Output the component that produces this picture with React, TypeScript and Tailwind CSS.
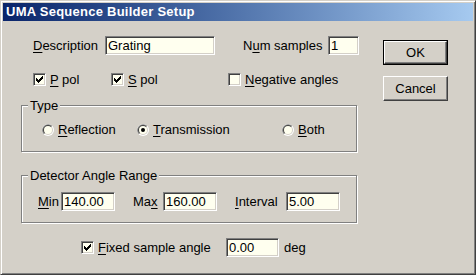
import React from "react";

const FONT = "font-['Liberation_Sans',Arial,sans-serif]";

// access-key underline
function Ul({ children }: { children: React.ReactNode }) {
  return <span className="underline decoration-1 underline-offset-2">{children}</span>;
}

function TextBox({ value, w }: { value: string; w: string }) {
  return (
    <div
      className={`${w} h-[19px] shrink-0 flex items-center pl-[2px] bg-[#ffffef] border border-t-[#808080] border-l-[#808080] border-r-white border-b-white shadow-[inset_1px_1px_0_#404040,inset_-1px_-1px_0_#d4d0c8]`}
    >
      {value}
    </div>
  );
}

function CheckBox({ checked }: { checked?: boolean }) {
  return (
    <div className="w-[13px] h-[13px] shrink-0 flex items-center justify-center bg-[#ffffef] border border-t-[#808080] border-l-[#808080] border-r-white border-b-white shadow-[inset_1px_1px_0_#404040,inset_-1px_-1px_0_#d4d0c8]">
      {checked && (
        <svg width="7" height="7" viewBox="0 0 7 7" shapeRendering="crispEdges">
          <path
            d="M6 0h1v1h-1z M5 1h2v1h-2z M0 2h1v1h-1z M4 2h3v1h-3z M0 3h2v1h-2z M3 3h3v1h-3z M0 4h5v1h-5z M1 5h3v1h-3z M2 6h1v1h-1z"
            fill="#000"
          />
        </svg>
      )}
    </div>
  );
}

function Radio({ checked }: { checked?: boolean }) {
  return (
    <svg width="12" height="12" viewBox="0 0 12 12" className="shrink-0">
      <circle cx="6" cy="6" r="6" fill="#fff" />
      <path d="M1.76 10.24A6 6 0 0 1 10.24 1.76L6 6Z" fill="#808080" />
      <circle cx="6" cy="6" r="5" fill="#d4d0c8" />
      <path d="M2.46 9.54A5 5 0 0 1 9.54 2.46L6 6Z" fill="#404040" />
      <circle cx="6" cy="6" r="4" fill="#ffffef" />
      {checked && <circle cx="6" cy="6" r="2" fill="#000" />}
    </svg>
  );
}

function Button({ children, isDefault }: { children: React.ReactNode; isDefault?: boolean }) {
  const face = (
    <div className="w-full h-full flex items-center justify-center border border-t-white border-l-white border-r-[#404040] border-b-[#404040] shadow-[inset_-1px_-1px_0_#808080]">
      {children}
    </div>
  );
  return isDefault ? (
    <div className="w-[65px] h-[25px] border border-black">{face}</div>
  ) : (
    <div className="w-[65px] h-[25px]">{face}</div>
  );
}

export default function App() {
  return (
    <div
      className={`w-[476px] h-[275px] p-[2px] bg-[#d4d0c8] text-[13px] text-black border border-t-[#d4d0c8] border-l-[#d4d0c8] border-r-[#404040] border-b-[#404040] shadow-[inset_1px_1px_0_#fff,inset_-1px_-1px_0_#808080] ${FONT}`}
    >
      {/* Title bar */}
      <div className="h-[18px] flex items-center pl-[3px] bg-gradient-to-r from-[#0a246a] to-[#a6caf0] text-white font-bold tracking-[0.25px]">
        UMA Sequence Builder Setup
      </div>

      <div className="flex">
        <div className="w-[338px] ml-[18px]">
          {/* Description / Num samples */}
          <div className="mt-[15px] h-[19px] flex items-center">
            <span className="ml-[12px] w-[72px]">
              <Ul>D</Ul>escription
            </span>
            <TextBox w="w-[110px]" value="Grating" />
            <span className="ml-[28px] w-[85px]">
              N<Ul>u</Ul>m samples
            </span>
            <TextBox w="w-[31px]" value="1" />
          </div>

          {/* Polarisation checkboxes */}
          <div className="mt-[18px] h-[13px] flex items-center">
            <label className="ml-[12px] w-[78px] flex items-center gap-[4px]">
              <CheckBox checked />
              <span>
                <Ul>P</Ul> pol
              </span>
            </label>
            <label className="w-[117px] flex items-center gap-[4px]">
              <CheckBox checked />
              <span>
                <Ul>S</Ul> pol
              </span>
            </label>
            <label className="flex items-center gap-[4px]">
              <CheckBox />
              <span>
                <Ul>N</Ul>egative angles
              </span>
            </label>
          </div>

          {/* Type */}
          <div className="relative mt-[19px] w-[336px] h-[47px] pt-[18px] pl-[20px] border border-[#808080] shadow-[inset_1px_1px_0_#fff,1px_1px_0_#fff]">
            <span className="absolute left-[6px] -top-[8px] px-[2px] leading-[15px] bg-[#d4d0c8]">Type</span>
            <div className="h-[12px] flex items-center">
              <label className="w-[95px] flex items-center gap-[4px]">
                <Radio />
                <span>
                  <Ul>R</Ul>eflection
                </span>
              </label>
              <label className="w-[145px] flex items-center gap-[4px]">
                <Radio checked />
                <span>
                  <Ul>T</Ul>ransmission
                </span>
              </label>
              <label className="flex items-center gap-[4px]">
                <Radio />
                <span>
                  <Ul>B</Ul>oth
                </span>
              </label>
            </div>
          </div>

          {/* Detector Angle Range */}
          <div className="relative mt-[23px] w-[336px] h-[48px] pt-[16px] pl-[16px] border border-[#808080] shadow-[inset_1px_1px_0_#fff,1px_1px_0_#fff]">
            <span className="absolute left-[6px] -top-[8px] px-[2px] leading-[15px] bg-[#d4d0c8]">
              Detector Angle Range
            </span>
            <div className="h-[19px] flex items-center">
              <span className="w-[23px]">
                <Ul>M</Ul>in
              </span>
              <TextBox w="w-[54px]" value="140.00" />
              <span className="ml-[18px] w-[30px]">
                Ma<Ul>x</Ul>
              </span>
              <TextBox w="w-[54px]" value="160.00" />
              <span className="ml-[18px] w-[51px]">
                <Ul>I</Ul>nterval
              </span>
              <TextBox w="w-[54px]" value="5.00" />
            </div>
          </div>

          {/* Fixed sample angle */}
          <div className="mt-[15px] h-[19px] flex items-center">
            <label className="ml-[60px] w-[145px] flex items-center gap-[4px]">
              <CheckBox checked />
              <span>
                <Ul>F</Ul>ixed sample angle
              </span>
            </label>
            <TextBox w="w-[53px]" value="0.00" />
            <span className="ml-[5px]">deg</span>
          </div>
        </div>

        {/* Buttons */}
        <div className="ml-[24px] mt-[19px] flex flex-col gap-[11px]">
          <Button isDefault>OK</Button>
          <Button>Cancel</Button>
        </div>
      </div>
    </div>
  );
}
